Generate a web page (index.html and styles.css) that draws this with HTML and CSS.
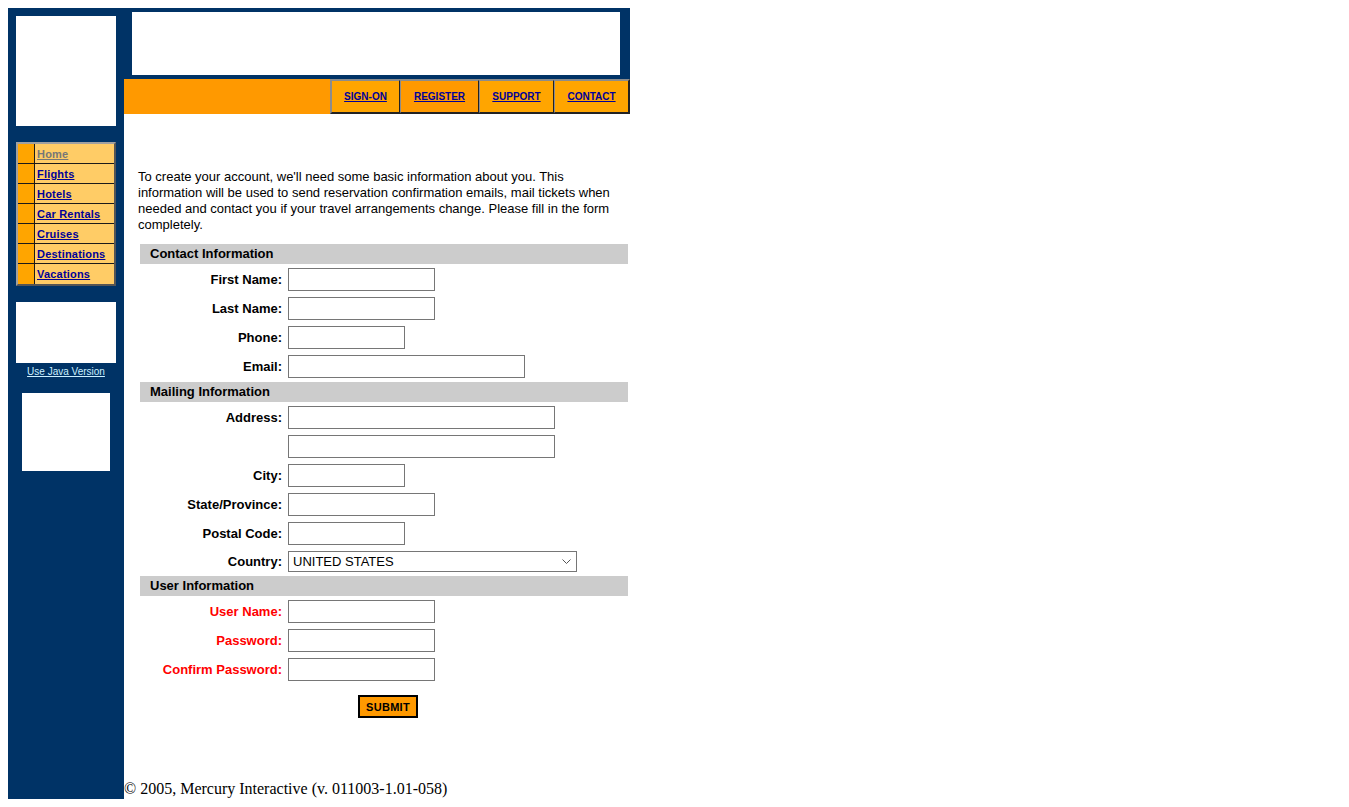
FILE: index.html
```html
<!DOCTYPE html>
<html>
<head>
<meta charset="utf-8">
<title>Register: Mercury Tours</title>
<link rel="stylesheet" href="styles.css">
</head>
<body>
<div class="page">
  <aside class="sidebar">
    <div class="logo"></div>
    <div class="sidenav">
      <div class="sn-row"><span class="sn-mark"></span><a class="sn-link visited" href="#">Home</a></div>
      <div class="sn-row"><span class="sn-mark"></span><a class="sn-link" href="#">Flights</a></div>
      <div class="sn-row"><span class="sn-mark"></span><a class="sn-link" href="#">Hotels</a></div>
      <div class="sn-row"><span class="sn-mark"></span><a class="sn-link" href="#">Car Rentals</a></div>
      <div class="sn-row"><span class="sn-mark"></span><a class="sn-link" href="#">Cruises</a></div>
      <div class="sn-row"><span class="sn-mark"></span><a class="sn-link" href="#">Destinations</a></div>
      <div class="sn-row last"><span class="sn-mark"></span><a class="sn-link" href="#">Vacations</a></div>
    </div>
    <div class="promo"></div>
    <a class="java" href="#">Use Java Version</a>
    <div class="ad"></div>
  </aside>
  <div class="main">
    <header class="masthead"><div class="banner"></div></header>
    <nav class="topnav">
      <div class="topnav-links">
        <a class="tn-cell c1" href="#"><span>SIGN-ON</span></a>
        <a class="tn-cell c2 alt" href="#"><span>REGISTER</span></a>
        <a class="tn-cell c3" href="#"><span>SUPPORT</span></a>
        <a class="tn-cell c4" href="#"><span>CONTACT</span></a>
      </div>
    </nav>
    <section class="content">
      <p class="intro">To create your account, we'll need some basic information about you. This information will be used to send reservation confirmation emails, mail tickets when needed and contact you if your travel arrangements change. Please fill in the form completely.</p>
      <form class="reg">
        <div class="sec">Contact Information</div>
        <div class="rows">
          <label class="lbl">First Name:</label><input class="inp w147" type="text">
          <label class="lbl">Last Name:</label><input class="inp w147" type="text">
          <label class="lbl">Phone:</label><input class="inp w117" type="text">
          <label class="lbl">Email:</label><input class="inp w237" type="text">
        </div>
        <div class="sec">Mailing Information</div>
        <div class="rows">
          <label class="lbl">Address:</label><input class="inp w267" type="text">
          <span class="lbl"></span><input class="inp w267" type="text">
          <label class="lbl">City:</label><input class="inp w117" type="text">
          <label class="lbl">State/Province:</label><input class="inp w147" type="text">
          <label class="lbl">Postal Code:</label><input class="inp w117" type="text">
          <label class="lbl">Country:</label>
          <div class="selwrap">
            <select class="sel"><option>UNITED STATES</option></select>
            <svg class="chev" width="9" height="5" viewBox="0 0 9 5"><path d="M0.5 0.5 L4.5 4.5 L8.5 0.5" fill="none" stroke="#555" stroke-width="1"/></svg>
          </div>
        </div>
        <div class="sec">User Information</div>
        <div class="rows">
          <label class="lbl req">User Name:</label><input class="inp w147" type="text">
          <label class="lbl req">Password:</label><input class="inp w147" type="password">
          <label class="lbl req">Confirm Password:</label><input class="inp w147" type="password">
        </div>
        <div class="submit-row"><button class="submit" type="button">SUBMIT</button></div>
      </form>
    </section>
    <footer class="foot">© 2005, Mercury Interactive (v. 011003-1.01-058)</footer>
  </div>
</div>
</body>
</html>
```

FILE: styles.css
```css
body {
  margin: 8px;
  background: #ffffff;
  font-family: "Liberation Serif", "Times New Roman", serif;
}

.page {
  display: flex;
  width: 622px;
  height: 791px;
}

/* ---------- Sidebar ---------- */
.sidebar {
  width: 116px;
  flex: none;
  background: #003366;
  padding: 8px 0 0 8px;
  box-sizing: border-box;
  display: flex;
  flex-direction: column;
}

.logo {
  width: 100px;
  height: 110px;
  background: #ffffff;
}

.sidenav {
  margin-top: 16px;
  width: 100px;
  box-sizing: border-box;
  border: 2px solid;
  border-color: #a0a0a0 #555555 #555555 #a0a0a0;
  background: #222222;
  display: flex;
  flex-direction: column;
}

.sn-row {
  display: flex;
  height: 20px;
  box-sizing: border-box;
  border-bottom: 1px solid #1a1a1a;
}
.sn-row.last { border-bottom: none; height: 20px; }

.sn-mark {
  width: 16px;
  flex: none;
  background: #ffa500;
  border-right: 1px solid #1a1a1a;
}

.sn-link {
  flex: 1;
  background: #ffcc66;
  padding-left: 2px;
  font: bold 11px/21px "Liberation Sans", Arial, sans-serif;
  letter-spacing: 0.2px;
  color: #000099;
  text-decoration: underline;
}
.sn-link.visited { color: #777777; }

.promo {
  margin-top: 16px;
  width: 100px;
  height: 61px;
  background: #ffffff;
}

.java {
  display: block;
  width: 100px;
  margin-top: 2px;
  text-align: center;
  font: 10px/13px "Liberation Sans", Arial, sans-serif;
  color: #ccf0ff;
  text-decoration: underline;
}

.ad {
  margin-top: 15px;
  margin-left: 6px;
  width: 88px;
  height: 78px;
  background: #ffffff;
}

/* ---------- Main ---------- */
.main {
  width: 506px;
  flex: none;
  display: flex;
  flex-direction: column;
}

.masthead {
  height: 71px;
  background: #003366;
  padding: 4px 10px 4px 8px;
  box-sizing: border-box;
}

.banner {
  height: 63px;
  background: #ffffff;
}

.topnav {
  height: 35px;
  background: #ff9900;
  display: flex;
  justify-content: flex-end;
}

.topnav-links {
  display: flex;
  height: 35px;
  box-sizing: border-box;
  border: 1px solid;
  border-color: #8c8c8c #222222 #222222 #8c8c8c;
  background: #222222;
}

.tn-cell {
  display: flex;
  align-items: center;
  justify-content: center;
  box-sizing: border-box;
  background: #ffa500;
  border: 1px solid;
  border-color: #8c8c8c #222222 #222222 #8c8c8c;
  font: bold 10px "Liberation Sans", Arial, sans-serif;
  color: #000099;
  text-decoration: underline;
}
.tn-cell.alt { background: #ff9900; }
.c1 { width: 69px; }
.c2 { width: 79px; }
.c3 { width: 75px; }
.c4 { width: 75px; }

.content {
  padding: 0 2px 0 14px;
}

.intro {
  margin: 55px 8px 0 0;
  font: 13px/16px "Liberation Sans", Arial, sans-serif;
  color: #000000;
}

.reg {
  margin: 11px 0 0 2px;
  font-family: "Liberation Sans", Arial, sans-serif;
}

.sec {
  height: 20px;
  background: #cccccc;
  padding-left: 10px;
  font: bold 13px/20px "Liberation Sans", Arial, sans-serif;
  color: #000000;
}

.rows {
  display: grid;
  grid-template-columns: 142px auto;
  column-gap: 6px;
  row-gap: 6px;
  justify-content: start;
  align-items: center;
  padding: 4px 0;
}

.lbl {
  text-align: right;
  font: bold 13px/16px "Liberation Sans", Arial, sans-serif;
  color: #000000;
}
.lbl.req { color: #ff0000; }

.inp {
  height: 23px;
  box-sizing: border-box;
  border: 1px solid #767676;
  border-radius: 0;
  padding: 1px 2px;
  margin: 0;
  background: #ffffff;
  font: 13px "Liberation Sans", Arial, sans-serif;
}
.w117 { width: 117px; }
.w147 { width: 147px; }
.w237 { width: 237px; }
.w267 { width: 267px; }

.selwrap {
  position: relative;
  width: 289px;
  height: 21px;
}

.sel {
  display: block;
  width: 289px;
  height: 21px;
  box-sizing: border-box;
  margin: 0;
  border: 1px solid #767676;
  border-radius: 0;
  background: #ffffff;
  font: 13px "Liberation Sans", Arial, sans-serif;
  color: #000000;
  padding: 0 0 0 4px;
  -webkit-appearance: none;
  appearance: none;
}

.chev {
  position: absolute;
  right: 6px;
  top: 8px;
  pointer-events: none;
}

.submit-row {
  padding: 10px 0 0 218px;
}

.submit {
  width: 60px;
  height: 23px;
  box-sizing: border-box;
  background: #ff9900;
  border: 2px solid #000000;
  border-radius: 0;
  padding: 0;
  margin: 0;
  font: bold 11px "Liberation Sans", Arial, sans-serif;
  letter-spacing: 0.3px;
  color: #000000;
}

.foot {
  margin-top: auto;
  margin-bottom: 1px;
  font: 16px/18px "Liberation Serif", "Times New Roman", serif;
  color: #000000;
}
```
